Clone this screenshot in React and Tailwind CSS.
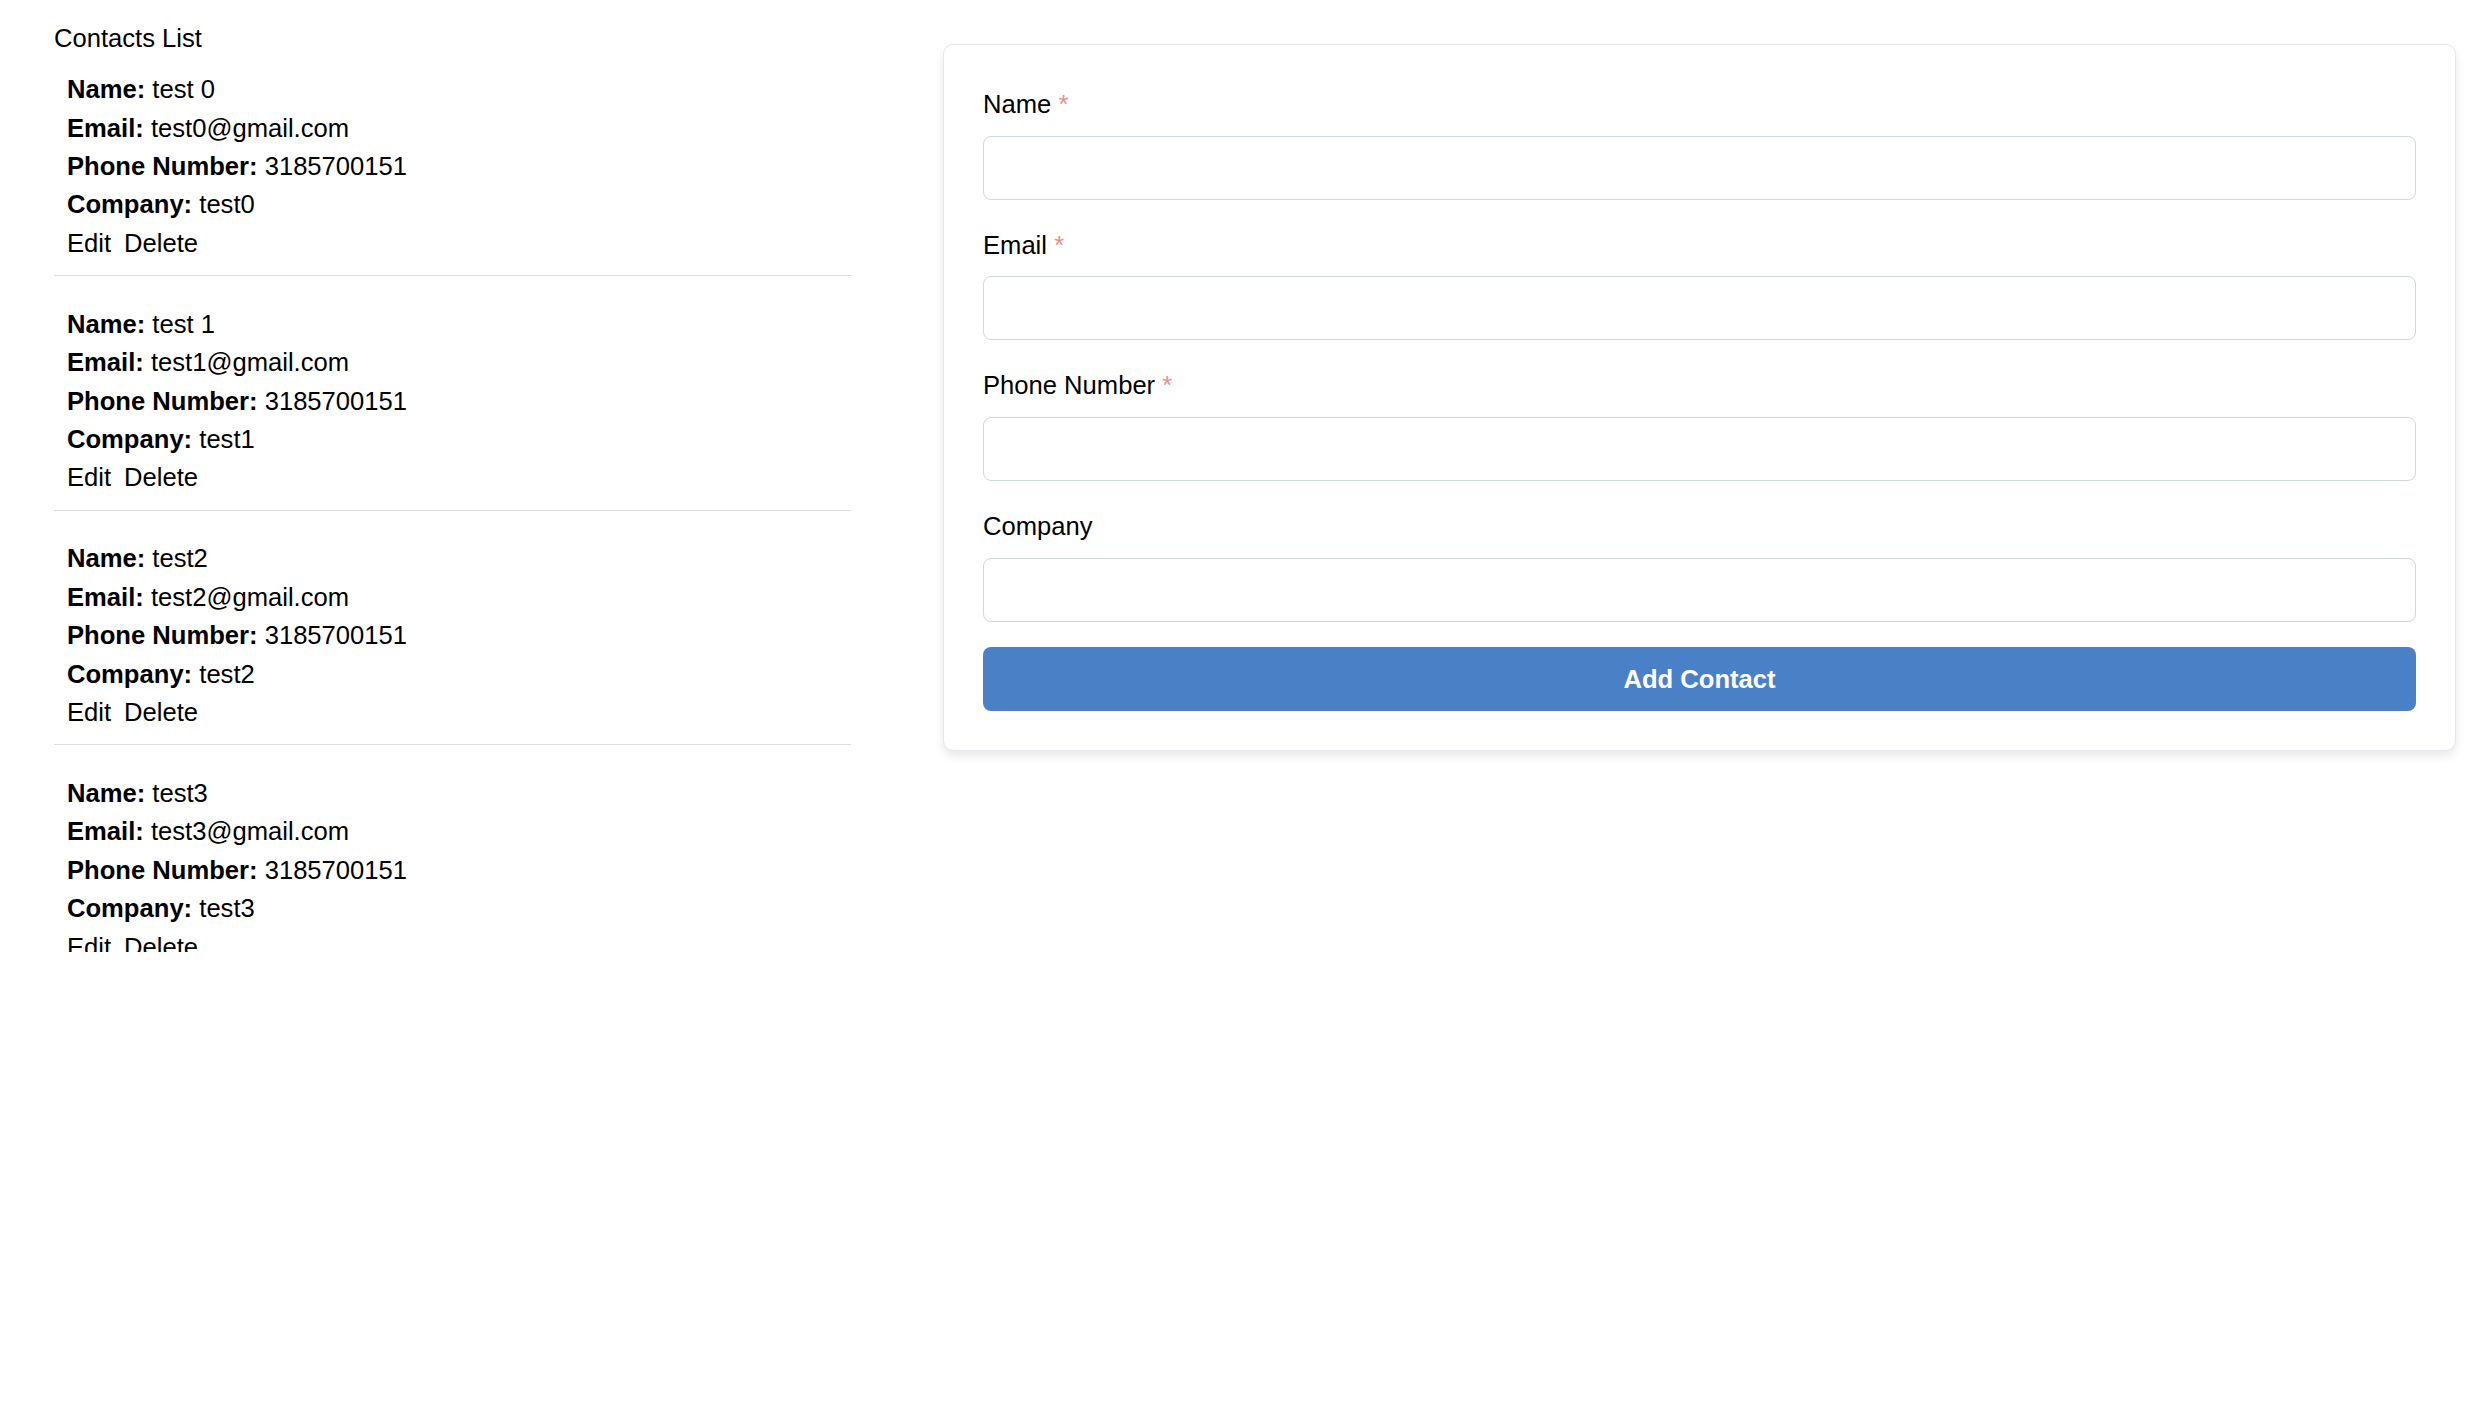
import React from "react";

const contacts = [
  { name: "test 0", email: "test0@gmail.com", phone: "3185700151", company: "test0" },
  { name: "test 1", email: "test1@gmail.com", phone: "3185700151", company: "test1" },
  { name: "test2", email: "test2@gmail.com", phone: "3185700151", company: "test2" },
  { name: "test3", email: "test3@gmail.com", phone: "3185700151", company: "test3" },
];

function Field({ label, required }) {
  return (
    <div className="mb-[25.8px]">
      <label className="block mb-[12.4px] leading-[38.4px]">
        {label}
        {required && (
          <>
            {" "}
            <span className="text-[#f28b8b]">*</span>
          </>
        )}
      </label>
      <input
        type="text"
        className="block w-full h-[64px] rounded-[8px] border border-[#cfd6e0] bg-white px-[16px] outline-none"
      />
    </div>
  );
}

export default function App() {
  return (
    <div className="min-h-[1416px] w-full bg-white text-black text-[25.6px] leading-[38.4px] font-['Liberation_Sans',Arial,sans-serif] flex pl-[54px] pr-[34px] gap-[92px] items-start">
      <div className="w-[797px] h-[952px] overflow-hidden flex flex-col shrink-0">
        <div className="mt-[19px]">Contacts List</div>
        <div>
          {contacts.map((c) => (
            <div
              key={c.email}
              className="px-[13px] py-[12.8px] mb-[16px] border-b border-[#dddddd]"
            >
              <div>
                <span className="font-bold">Name:</span> {c.name}
              </div>
              <div>
                <span className="font-bold">Email:</span> {c.email}
              </div>
              <div>
                <span className="font-bold">Phone Number:</span> {c.phone}
              </div>
              <div>
                <span className="font-bold">Company:</span> {c.company}
              </div>
              <div className="flex gap-[13px]">
                <button className="leading-[38.4px]">Edit</button>
                <button className="leading-[38.4px]">Delete</button>
              </div>
            </div>
          ))}
        </div>
      </div>
      <div className="flex-1 mt-[44px] rounded-[10px] border border-[#e3e6ea] bg-white shadow-[0_5px_10px_rgba(0,0,0,0.09)] px-[39px] pt-[40px] pb-[39px]">
        <Field label="Name" required />
        <Field label="Email" required />
        <Field label="Phone Number" required />
        <Field label="Company" />
        <button className="block w-full h-[64px] mt-[2px] rounded-[8px] bg-[#4a80c6] text-white font-bold">
          Add Contact
        </button>
      </div>
    </div>
  );
}
